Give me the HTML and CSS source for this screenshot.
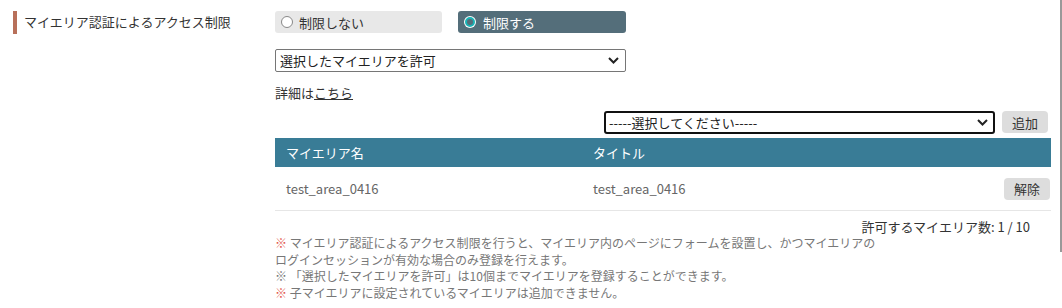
FILE: index.html
```html
<!DOCTYPE html>
<html lang="ja">
<head>
    <meta charset="UTF-8">
    <title>マイエリア認証によるアクセス制限</title>
    <link rel="stylesheet" href="styles.css">
</head>
<body>
    <div class="form-row">
        <div class="form-label"><span>マイエリア認証によるアクセス制限</span></div>
        <div class="form-body">
            <div class="radio-group">
                <label class="radio"><span class="dot"></span>制限しない</label>
                <label class="radio checked"><span class="dot"></span>制限する</label>
            </div>
            <div class="select wide">
                <span>選択したマイエリアを許可</span>
                <svg width="11" height="7" viewBox="0 0 11 7"><path d="M1 1l4.5 4.5L10 1" fill="none" stroke="#222" stroke-width="2"/></svg>
            </div>
            <p class="detail">詳細は<a href="#">こちら</a></p>
            <div class="add-row">
                <div class="select focused">
                    <span>-----選択してください-----</span>
                    <svg width="11" height="7" viewBox="0 0 11 7"><path d="M1 1l4.5 4.5L10 1" fill="none" stroke="#222" stroke-width="2"/></svg>
                </div>
                <button class="btn">追加</button>
            </div>
            <table class="area-table">
                <thead>
                    <tr><th class="col-name">マイエリア名</th><th>タイトル</th><th></th></tr>
                </thead>
                <tbody>
                    <tr>
                        <td>test_area_0416</td>
                        <td>test_area_0416</td>
                        <td class="col-action"><button class="btn">解除</button></td>
                    </tr>
                </tbody>
            </table>
            <p class="count">許可するマイエリア数: 1 / 10</p>
            <ul class="notes">
                <li><span class="mark red">※</span> マイエリア認証によるアクセス制限を行うと、マイエリア内のページにフォームを設置し、かつマイエリアのログインセッションが有効な場合のみ登録を行えます。</li>
                <li><span class="mark">※</span> 「選択したマイエリアを許可」は10個までマイエリアを登録することができます。</li>
                <li><span class="mark red">※</span> 子マイエリアに設定されているマイエリアは追加できません。</li>
            </ul>
        </div>
    </div>
    <div class="scroll-edge"></div>
</body>
</html>
```

FILE: styles.css
```css
html, body {
    margin: 0;
    height: 100%;
    overflow: hidden;
}
body {
    font-family: "Noto Sans CJK JP", "Noto Sans", sans-serif;
    font-size: 13px;
    color: #333;
    background: #fff;
}
.form-row {
    display: flex;
}
.form-label {
    width: 262px;
    padding: 11px 0 0 13px;
}
.form-label span {
    display: block;
    border-left: 4px solid #b8705a;
    padding-left: 7px;
    height: 23px;
    line-height: 22px;
    color: #333;
}
.form-body {
    width: 776px;
    padding-top: 11px;
}
.radio-group {
    display: flex;
    gap: 16px;
}
.radio {
    display: flex;
    align-items: center;
    width: 167px;
    height: 22px;
    box-sizing: border-box;
    padding-left: 6px;
    background: #e8e8e8;
    border-radius: 3px;
    color: #333;
}
.radio .dot {
    width: 10px;
    height: 10px;
    border: 1px solid #888;
    border-radius: 50%;
    background: #fff;
    margin-right: 6px;
}
.radio.checked {
    width: 168px;
    background: #546e7a;
    color: #fff;
}
.radio.checked .dot {
    width: 6px;
    height: 6px;
    border: 2px solid #19b3b5;
    background: #546e7a;
    box-shadow: 0 0 0 1px #fff;
    margin-left: 1px;
    margin-right: 8px;
}
.select {
    display: flex;
    align-items: center;
    justify-content: space-between;
    box-sizing: border-box;
    height: 23px;
    border: 1px solid #767676;
    border-radius: 2px;
    padding: 0 6px 0 4px;
    color: #222;
    background: #fff;
}
.select.wide {
    width: 351px;
    margin-top: 16px;
}
.detail {
    margin: 0;
    padding-top: 13px;
    line-height: 16px;
}
.detail a {
    color: #333;
}
.add-row {
    display: flex;
    justify-content: flex-end;
    gap: 7px;
    margin-top: 10px;
    padding-right: 3px;
}
.select.focused {
    width: 391px;
    border: 2px solid #111;
    border-radius: 3px;
    padding: 0 5px 0 3px;
}
.btn {
    font-family: inherit;
    font-size: 13px;
    color: #333;
    background: #ddd;
    border: none;
    border-radius: 4px;
    height: 22px;
    padding: 0 10px;
}
.area-table {
    width: 100%;
    border-collapse: collapse;
    margin-top: 4px;
}
.area-table th {
    background: #397c96;
    color: #fff;
    font-weight: normal;
    text-align: left;
    height: 29px;
    padding: 0 11px;
}
.area-table th.col-name {
    width: 285px;
}
.area-table td {
    color: #666;
    height: 43px;
    padding: 0 11px;
    border-bottom: 1px solid #e6e6e6;
}
.area-table td.col-action {
    text-align: right;
    padding-right: 1px;
}
.count {
    margin: 0;
    text-align: right;
    padding: 7px 21px 0 0;
    line-height: 17px;
}
.notes {
    list-style: none;
    margin: 0;
    padding: 0;
    width: 606px;
    font-size: 12px;
    line-height: 16.7px;
    color: #777;
}
.mark.red {
    color: #e2574c;
}
.scroll-edge {
    position: fixed;
    top: 0;
    right: 0;
    width: 2px;
    height: 252px;
    background: #999;
}
```
